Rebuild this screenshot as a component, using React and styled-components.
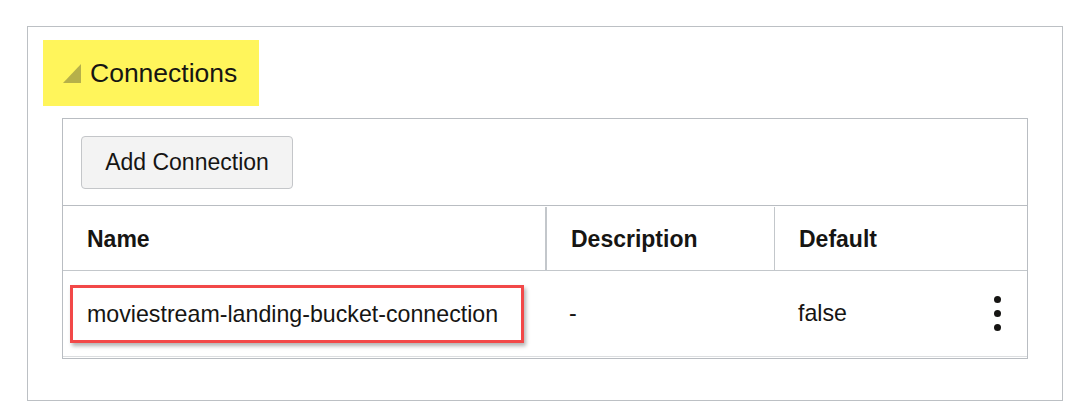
import styled, { createGlobalStyle } from 'styled-components'

const Global = createGlobalStyle`
    body {
        margin: 0;
        background: #fff;
        font-family: "Liberation Sans", Arial, sans-serif;
        color: #161513;
    }
`

const Panel = styled.section`
    box-sizing: border-box;
    margin: 26px 0 0 27px;
    width: 1036px;
    height: 375px;
    border: 1px solid #bcc0c4;
    padding: 13px 0 0 15px;
`

const Heading = styled.div`
    display: inline-flex;
    align-items: center;
    height: 66px;
    width: 216px;
    box-sizing: border-box;
    padding-left: 20px;
    background: #fff55b;
    font-size: 26.5px;
    gap: 9px;
`

const Triangle = styled.span`
    width: 0;
    height: 0;
    border-left: 18px solid transparent;
    border-bottom: 19px solid #b6b04a;
    margin-top: 1px;
`

const TableBox = styled.div`
    margin: 12px 0 0 19px;
    width: 966px;
    box-sizing: border-box;
    border: 1px solid #b9bdc2;
    padding-bottom: 1px;
`

const Toolbar = styled.div`
    display: flex;
    align-items: center;
    height: 86px;
    padding-left: 18px;
    border-bottom: 1px solid #b9bdc2;
`

const Button = styled.button`
    height: 53px;
    width: 212px;
    background: #f3f3f3;
    border: 1px solid #c4c6c9;
    border-radius: 4px;
    font-family: inherit;
    font-size: 23px;
    color: #161513;
    padding: 0;
`

const Row = styled.div`
    display: grid;
    grid-template-columns: 482px 229px 1fr;
    height: ${p => p.$head ? '64px' : '85px'};
    border-bottom: 1px solid ${p => p.$head ? '#c3c7cb' : '#dcdee0'};
    align-items: center;
`

const Cell = styled.div`
    display: flex;
    align-items: center;
    justify-content: space-between;
    height: 100%;
    padding: 0 26px 0 24px;
    font-size: ${p => p.$head ? '23px' : '23.2px'};
    font-weight: ${p => p.$head ? 700 : 400};
    white-space: nowrap;
    border-left: ${p => p.$divider ? `${p.$divider}px solid #c3c7cb` : 'none'};
    box-sizing: border-box;
    ${p => p.$head && 'margin-top: 2px;'}
`

const Highlight = styled.span`
    flex-shrink: 0;
    margin-left: -17px;
    padding: 13px 23px 12px 14px;
    border: 3px solid #f24848;
    box-shadow: 2px 3px 4px rgba(0, 0, 0, 0.3);
`

const Kebab = styled.span`
    display: flex;
    flex-direction: column;
    gap: 7px;
    i {
        width: 7px;
        height: 7px;
        border-radius: 50%;
        background: #161513;
    }
`

export default function App() {
  return (
    <>
      <Global />
      <Panel>
        <Heading>
          <Triangle />
          Connections
        </Heading>
        <TableBox>
          <Toolbar>
            <Button>Add Connection</Button>
          </Toolbar>
          <Row $head>
            <Cell $head>Name</Cell>
            <Cell $head $divider={2}>Description</Cell>
            <Cell $head $divider={1}>Default</Cell>
          </Row>
          <Row>
            <Cell><Highlight>moviestream-landing-bucket-connection</Highlight></Cell>
            <Cell>-</Cell>
            <Cell>
              false
              <Kebab><i /><i /><i /></Kebab>
            </Cell>
          </Row>
        </TableBox>
      </Panel>
    </>
  )
}
